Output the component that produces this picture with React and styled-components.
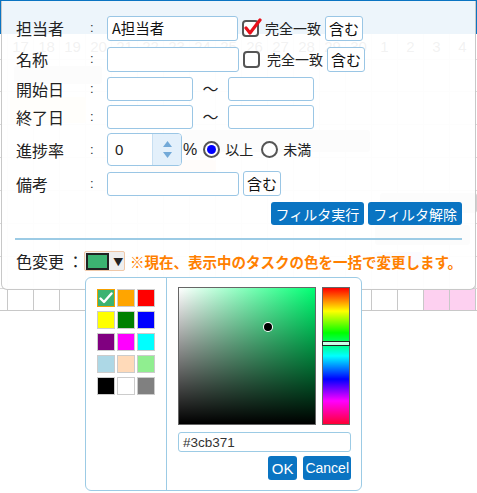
import styled, { createGlobalStyle } from "styled-components";

const GlobalStyle = createGlobalStyle`
  html, body {
    margin: 0;
    padding: 0;
    background: #ffffff;
  }
  body {
    font-family: "Noto Sans CJK JP", "Noto Sans", sans-serif;
    color: #222;
  }
  * {
    box-sizing: border-box;
  }
`;

const Page = styled.div`
  position: relative;
  width: 477px;
  height: 493px;
  overflow: hidden;
  background: #fff;
`;

/* ---------- gantt chart behind the filter panel ---------- */

const Gantt = styled.div`
  position: relative;
  display: flex;
  flex-direction: column;
  width: 477px;
`;

const GanttHeader = styled.div`
  height: 34px;
  background: #0a74c2;
`;

const GridRow = styled.div`
  display: flex;
  height: ${({ $h }) => $h}px;
  border-bottom: 1px solid ${({ $strong }) => ($strong ? "#c8c8c8" : "#d8d8d8")};
`;

const Cell = styled.div`
  flex: 0 0 ${({ $w }) => $w || 26}px;
  border-right: 1px solid ${({ $strong }) => ($strong ? "#c8c8c8" : "#d8d8d8")};
  background: ${({ $pink }) => ($pink ? "#fdd0f0" : "transparent")};
  display: flex;
  align-items: center;
  justify-content: center;
  font-family: "Liberation Sans", Arial, sans-serif;
  font-size: 15px;
  color: #444;
`;

const Bar = styled.div`
  position: absolute;
  left: ${({ $x }) => $x}px;
  top: ${({ $y }) => $y}px;
  width: ${({ $w }) => $w}px;
  height: ${({ $h }) => $h}px;
  background: ${({ $bg }) => $bg};
  border-radius: 3px;
`;

/* ---------- filter panel ---------- */

const Panel = styled.div`
  position: absolute;
  top: 1px;
  left: 1px;
  width: 475px;
  height: 289px;
  background: rgba(255, 255, 255, 0.93);
  border: 1px solid #c8c8c8;
  border-top: none;
  border-radius: 0 0 6px 6px;
  padding: 14px 13px 0 14px;
  display: flex;
  flex-direction: column;
  gap: 5px;
`;

const FieldRow = styled.div`
  display: flex;
  align-items: center;
  height: ${({ $h }) => $h || 26}px;
  font-size: 14px;
  line-height: 1.2;
`;

const Label = styled.div`
  width: 74px;
  font-size: 16px;
  line-height: 1;
  color: #222;
`;

const Colon = styled.span`
  width: 17px;
  font-family: "Liberation Sans", Arial, sans-serif;
  font-size: 13px;
  color: #333;
`;

const TextInput = styled.div`
  width: ${({ $w }) => $w}px;
  height: ${({ $h }) => $h || 24}px;
  border: 1px solid #9ac6e5;
  border-radius: 3px;
  background: #fff;
  font-size: 14.5px;
  padding-left: 4px;
  display: flex;
  align-items: center;
  color: #111;
`;

const SmallButton = styled.button`
  height: 25px;
  margin-left: ${({ $ml }) => $ml || 0}px;
  padding: 0 3px;
  border: 1px solid #9ac6e5;
  border-radius: 3px;
  background: #fff;
  font-family: inherit;
  font-size: 15px;
  color: #111;
  line-height: 1;
`;

const Check = styled.svg`
  margin-left: 4px;
  flex: 0 0 auto;
`;

const OptionText = styled.span`
  margin-left: ${({ $ml }) => $ml || 4}px;
  font-size: 14px;
  color: #222;
`;

const Tilde = styled.span`
  width: 35px;
  text-align: center;
  font-size: 16px;
`;

const Spin = styled.div`
  display: flex;
  width: 75px;
  height: 33px;
  border: 1px solid #9ac6e5;
  border-radius: 4px;
  overflow: hidden;
  background: #fff;
`;

const SpinValue = styled.div`
  flex: 1;
  display: flex;
  align-items: center;
  padding-left: 7px;
  font-family: "Liberation Sans", Arial, sans-serif;
  font-size: 15px;
`;

const SpinArrows = styled.div`
  width: 29px;
  border-left: 1px solid #c7dff2;
  background: #e3f0fb;
  display: flex;
  flex-direction: column;
  align-items: center;
  justify-content: space-around;
  padding: 4px 0;
`;

const Percent = styled.span`
  margin-left: 1px;
  font-family: "Liberation Sans", Arial, sans-serif;
  font-size: 16px;
`;

const Radio = styled.span`
  width: 17px;
  height: 17px;
  margin-left: ${({ $ml }) => $ml || 0}px;
  border: 2px solid #555;
  border-radius: 50%;
  display: inline-flex;
  align-items: center;
  justify-content: center;
  background: #fff;
  &::after {
    content: "";
    width: 9px;
    height: 9px;
    border-radius: 50%;
    background: ${({ $on }) => ($on ? "#0000ff" : "transparent")};
  }
`;

const ActionRow = styled.div`
  display: flex;
  justify-content: flex-end;
  gap: 4px;
  margin-top: 1px;
`;

const BlueButton = styled.button`
  height: ${({ $h }) => $h || 23}px;
  padding: 0 ${({ $px }) => $px ?? 5}px;
  border: none;
  border-radius: 3px;
  background: #0a74c2;
  color: #fff;
  font-family: ${({ $latin }) =>
    $latin ? '"Liberation Sans", Arial, sans-serif' : "inherit"};
  font-size: ${({ $fs }) => $fs || 14}px;
  line-height: 1;
`;

const Separator = styled.div`
  height: 2px;
  margin: 8px 0 0 -1px;
  background: #9ccbe5;
`;

const ColorRow = styled.div`
  display: flex;
  align-items: center;
  height: 20px;
  margin-top: 6px;
`;

const ColorLabel = styled.span`
  width: 69px;
  font-size: 16px;
  line-height: 1;
`;

const ColorButton = styled.div`
  width: 41px;
  height: 20px;
  border: 1px solid #f0c8a8;
  border-radius: 2px;
  background: #efefef;
  display: flex;
  align-items: center;
  padding-left: 1px;
  gap: 4px;
  font-size: 10px;
`;

const CurrentSwatch = styled.span`
  width: 23px;
  height: 17px;
  border: 2px solid #222;
  background: #3cb371;
`;

const Notice = styled.span`
  margin-left: 5px;
  font-size: 14.5px;
  font-weight: bold;
  color: #ff7f00;
  white-space: nowrap;
`;

/* ---------- colour picker popup ---------- */

const Picker = styled.div`
  position: absolute;
  top: 277px;
  left: 85px;
  width: 277px;
  height: 214px;
  background: #fff;
  border: 1px solid #9ccbe5;
  border-radius: 6px;
  display: flex;
`;

const Palette = styled.div`
  width: 81px;
  border-right: 1px solid #9ccbe5;
  padding: 11px 0 0 11px;
  display: grid;
  grid-template-columns: repeat(3, 18px);
  grid-auto-rows: 18px;
  column-gap: 2px;
  row-gap: 4px;
  align-content: start;
`;

const Swatch = styled.div`
  border: 1px solid ${({ $on }) => ($on ? "#f5a000" : "#cccccc")};
  background: ${({ $c }) => $c};
  display: flex;
  align-items: center;
  justify-content: center;
`;

const PickerMain = styled.div`
  flex: 1;
  padding: 9px 10px 0 11px;
  display: flex;
  flex-direction: column;
`;

const Fields = styled.div`
  display: flex;
  gap: 6px;
`;

const SatBox = styled.div`
  position: relative;
  width: 138px;
  height: 138px;
  border: 1px solid #666;
  background: linear-gradient(to bottom, rgba(0, 0, 0, 0), #000),
    linear-gradient(to right, #fff, hsl(147, 100%, 50%));
`;

const SatDot = styled.span`
  position: absolute;
  left: 85px;
  top: 35px;
  width: 8px;
  height: 8px;
  border-radius: 50%;
  background: #000;
  box-shadow: 0 0 0 1px #fff;
`;

const HueStrip = styled.div`
  position: relative;
  width: 28px;
  height: 138px;
  border: 1px solid #666;
  background: linear-gradient(
    to bottom,
    #f00 0%,
    #ff0 17%,
    #0f0 33%,
    #0ff 50%,
    #00f 67%,
    #f0f 83%,
    #f03 100%
  );
`;

const HueMarker = styled.span`
  position: absolute;
  left: -1px;
  right: -1px;
  top: 53px;
  height: 5px;
  border: 1px solid #222;
  background: #c9ffe6;
`;

const HexInput = styled.div`
  margin-top: 7px;
  height: 20px;
  border: 1px solid #9ccbe5;
  border-radius: 3px;
  padding-left: 4px;
  display: flex;
  align-items: center;
  font-family: "Liberation Sans", Arial, sans-serif;
  font-size: 13.5px;
  color: #333;
`;

const PickerButtons = styled.div`
  display: flex;
  justify-content: flex-end;
  gap: 6px;
  margin-top: 4px;
`;

const dates = [17, 18, 19, 20, 21, 22, 23, 24, 25, 26, 27, 28, 29, 30, 1, 2, 3, 4];

const palette = [
  "#3cb371", "orange", "red",
  "yellow", "green", "blue",
  "purple", "magenta", "cyan",
  "lightblue", "peachpuff", "lightgreen",
  "black", "white", "gray",
];

const bodyRows = [32, 33, 33, 33, 33, 33, 32];

function CheckBox({ checked }) {
  return (
    <Check width="20" height="20" viewBox="0 0 20 20">
      <rect x="1" y="3" width="15" height="15" rx="3" fill="#fff" stroke="#555" strokeWidth="2" />
      {checked && (
        <path d="M4 10 L8 15 L18 2" fill="none" stroke="#e8101a" strokeWidth="3.2" strokeLinecap="round" strokeLinejoin="round" />
      )}
    </Check>
  );
}

function GanttBackground() {
  return (
    <Gantt>
      <GanttHeader />
      <GridRow $h={26}>
        <Cell $w={8} />
        {dates.map((d, i) => (
          <Cell key={i}>{d}</Cell>
        ))}
      </GridRow>
      {bodyRows.map((h, r) => (
        <GridRow key={r} $h={h}>
          <Cell $w={8} />
          {dates.map((d, i) => (
            <Cell key={i} />
          ))}
        </GridRow>
      ))}
      <GridRow $h={22} $strong>
        <Cell $w={8} $strong />
        {dates.map((d, i) => (
          <Cell key={i} $strong $pink={i >= 16} />
        ))}
      </GridRow>
      <Bar $x={14} $y={66} $w={88} $h={18} $bg="#d0d0d0" />
      <Bar $x={10} $y={97} $w={76} $h={26} $bg="#ffe6c4" />
      <Bar $x={182} $y={130} $w={188} $h={22} $bg="#d4d4d4" />
      <Bar $x={140} $y={160} $w={76} $h={18} $bg="#ffd6bb" />
      <Bar $x={380} $y={193} $w={97} $h={20} $bg="#d0d0d0" />
      <Bar $x={375} $y={225} $w={95} $h={20} $bg="#d0d0d0" />
      <Bar $x={373} $y={252} $w={50} $h={17} $bg="#c8c8ff" />
    </Gantt>
  );
}

export default function App() {
  return (
    <>
      <GlobalStyle />
      <Page>
        <GanttBackground />

        <Panel>
          <FieldRow>
            <Label>担当者</Label>
            <Colon>:</Colon>
            <TextInput $w={131} $h={25}>A担当者</TextInput>
            <CheckBox checked />
            <OptionText $ml={3}>完全一致</OptionText>
            <SmallButton $ml={4}>含む</SmallButton>
          </FieldRow>
          <FieldRow>
            <Label>名称</Label>
            <Colon>:</Colon>
            <TextInput $w={132} $h={25} />
            <CheckBox />
            <OptionText $ml={4}>完全一致</OptionText>
            <SmallButton $ml={4}>含む</SmallButton>
          </FieldRow>
          <FieldRow $h={23}>
            <Label>開始日</Label>
            <Colon>:</Colon>
            <TextInput $w={86} $h={24} />
            <Tilde>〜</Tilde>
            <TextInput $w={86} $h={24} />
          </FieldRow>
          <FieldRow $h={23}>
            <Label>終了日</Label>
            <Colon>:</Colon>
            <TextInput $w={86} $h={24} />
            <Tilde>〜</Tilde>
            <TextInput $w={86} $h={24} />
          </FieldRow>
          <FieldRow $h={33}>
            <Label>進捗率</Label>
            <Colon>:</Colon>
            <Spin>
              <SpinValue>0</SpinValue>
              <SpinArrows>
                <svg width="9" height="6" viewBox="0 0 9 6">
                  <path d="M0 6 L4.5 0 L9 6 Z" fill="#72a9d8" />
                </svg>
                <svg width="9" height="6" viewBox="0 0 9 6">
                  <path d="M0 0 L4.5 6 L9 0 Z" fill="#72a9d8" />
                </svg>
              </SpinArrows>
            </Spin>
            <Percent>%</Percent>
            <Radio $on $ml={6} />
            <OptionText $ml={5}>以上</OptionText>
            <Radio $ml={8} />
            <OptionText $ml={5}>未満</OptionText>
          </FieldRow>
          <FieldRow $h={25}>
            <Label>備考</Label>
            <Colon>:</Colon>
            <TextInput $w={132} $h={24} />
            <SmallButton $ml={4}>含む</SmallButton>
          </FieldRow>
          <ActionRow>
            <BlueButton>フィルタ実行</BlueButton>
            <BlueButton>フィルタ解除</BlueButton>
          </ActionRow>
          <Separator />
          <ColorRow>
            <ColorLabel>色変更 ：</ColorLabel>
            <ColorButton>
              <CurrentSwatch />
              <span>▼</span>
            </ColorButton>
            <Notice>※現在、表示中のタスクの色を一括で変更します。</Notice>
          </ColorRow>
        </Panel>

        <Picker>
          <Palette>
            {palette.map((c, i) => (
              <Swatch key={c} $c={c} $on={i === 0}>
                {i === 0 && (
                  <svg width="14" height="12" viewBox="0 0 14 12">
                    <path d="M1.5 6.5 L5 10 L12.5 1.5" fill="none" stroke="#fff" strokeWidth="2.4" strokeLinecap="round" strokeLinejoin="round" />
                  </svg>
                )}
              </Swatch>
            ))}
          </Palette>
          <PickerMain>
            <Fields>
              <SatBox>
                <SatDot />
              </SatBox>
              <HueStrip>
                <HueMarker />
              </HueStrip>
            </Fields>
            <HexInput>#3cb371</HexInput>
            <PickerButtons>
              <BlueButton $latin $h={24} $px={4} $fs={15}>OK</BlueButton>
              <BlueButton $latin $h={24} $px={2} $fs={14}>Cancel</BlueButton>
            </PickerButtons>
          </PickerMain>
        </Picker>
      </Page>
    </>
  );
}
